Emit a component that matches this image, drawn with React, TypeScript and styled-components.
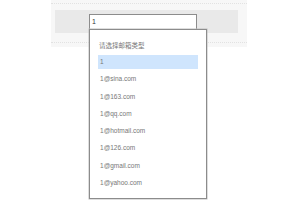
import styled, { createGlobalStyle } from 'styled-components';

const GlobalStyle = createGlobalStyle`
    html, body {
        margin: 0;
        background: #ffffff;
        font-family: "Liberation Sans", "Noto Sans CJK SC", sans-serif;
    }
    #root {
        min-height: 200px;
    }
`;

const Page = styled.div`
    height: 200px;
`;

const Panel = styled.div`
    width: 196px;
    margin-left: 51px;
    padding: 3px 0 4px;
    background: #f7f7f7;
`;

const Section = styled.div`
    border-top: 1px dotted #e2e2e2;
    border-bottom: 1px dotted #e2e2e2;
    padding: 6px 9px 9px 4px;
`;

const SearchBar = styled.div`
    height: 23px;
    background: #e9e9e9;
    padding: 4px 0 0 34px;
    box-sizing: border-box;
`;

const Field = styled.div`
    position: relative;
    width: 108px;
    height: 16px;
    box-sizing: border-box;
    background: #fff;
    border: 1px solid #8c8c8c;
    font-size: 7px;
    line-height: 14px;
    padding-left: 2px;
    color: #333;
`;

const Dropdown = styled.div`
    position: absolute;
    top: 14px;
    left: -1px;
    width: 118px;
    height: 170px;
    box-sizing: border-box;
    background: #fff;
    border: 1px solid #8c8c8c;
    box-shadow: 0 0 0 0.5px #bdbdbd;
    z-index: 2;
`;

const Caption = styled.div`
    padding: 11px 0 0 9px;
    height: 25px;
    box-sizing: border-box;
    font-size: 6.5px;
    line-height: 10px;
    color: #777;
`;

const Option = styled.div<{ $active?: boolean }>`
    height: 14px;
    margin: 0 8px 3.3px 8px;
    padding-left: 2px;
    font-size: 6.5px;
    line-height: 14px;
    color: #777;
    background: ${(p) => (p.$active ? '#cfe5fd' : 'transparent')};
`;

const value = '1';
const domains = ['sina.com', '163.com', 'qq.com', 'hotmail.com', '126.com', 'gmail.com', 'yahoo.com'];

const App = () => {
	return (
		<Page>
			<GlobalStyle />
			<Panel>
				<Section>
					<SearchBar>
						<Field>
							{value}
							<Dropdown>
								<Caption>请选择邮箱类型</Caption>
								<Option $active>{value}</Option>
								{domains.map((d) => (
									<Option key={d}>{value}@{d}</Option>
								))}
							</Dropdown>
						</Field>
					</SearchBar>
				</Section>
			</Panel>
		</Page>
	);
};

export default App;
